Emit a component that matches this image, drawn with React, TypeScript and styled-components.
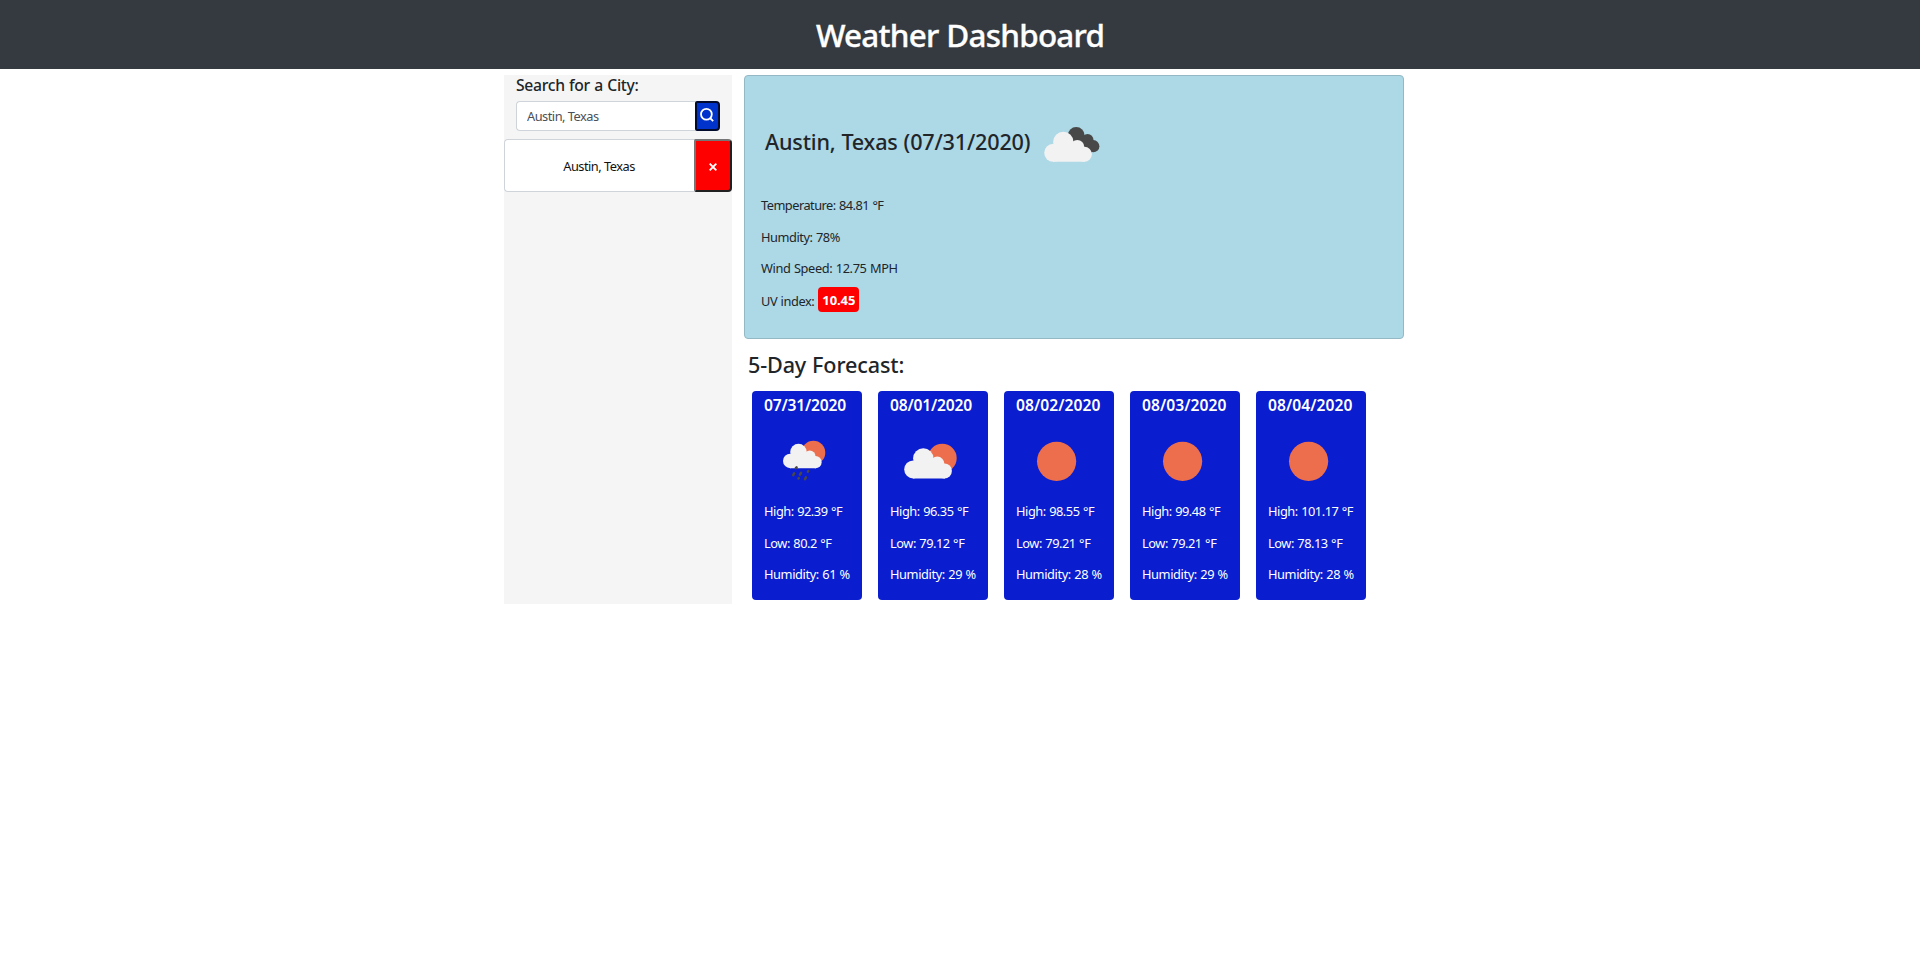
import React from 'react';
import styled, { createGlobalStyle } from 'styled-components';

const GlobalStyle = createGlobalStyle`
  *, *::before, *::after { box-sizing: border-box; }
  body {
    margin: 0;
    background: #fff;
    color: #212529;
    font-family: 'Noto Sans', 'Open Sans', sans-serif;
    font-size: 12.8px;
    line-height: 19.5px;
    word-spacing: 0.5px;
  }
  h1, h2, h3, p { margin: 0; font-weight: 500; white-space: nowrap; }
`;

const Header = styled.header`
  display: flex;
  justify-content: center;
  height: 69px;
  padding-top: 11px;
  background: #343a40;
`;

const PageTitle = styled.h1`
  color: #fff;
  font-size: 31.4px;
  line-height: 48px;
  letter-spacing: -0.76px;
  -webkit-text-stroke: 0.35px #fff;
`;

const Layout = styled.main`
  display: flex;
  gap: 12px;
  width: 900px;
  margin: 6px 0 0 504px;
`;

const Sidebar = styled.aside`
  width: 228px;
  height: 529px;
  background: #f5f5f5;
`;

const SearchPanel = styled.form`
  padding: 0 12px;
`;

const SearchTitle = styled.h3`
  font-size: 15.7px;
  line-height: 20px;
  letter-spacing: -0.29px;
  margin-bottom: 6px;
`;

const SearchRow = styled.div`
  display: flex;
  height: 30px;
`;

const SearchInput = styled.input`
  width: 179px;
  padding: 1px 0 0 10px;
  border: 1px solid #ced4da;
  border-right: 0;
  border-radius: 4px 0 0 4px;
  background: #fff;
  color: #495057;
  font: inherit;
  letter-spacing: -0.5px;
`;

const SearchButton = styled.button`
  display: grid;
  place-items: center;
  width: 25px;
  padding: 0 1px 2px 0;
  border: 2px solid #020b2c;
  border-radius: 2px 4px 4px 2px;
  background: #0033cc;
`;

const HistoryRow = styled.div`
  display: flex;
  height: 53px;
  margin-top: 8px;
`;

const HistoryCity = styled.button`
  width: 190px;
  padding: 2px 1px 0 0;
  border: 1px solid #ced4da;
  border-right: 0;
  border-radius: 4px 0 0 4px;
  background: #fff;
  color: #111;
  font: inherit;
  letter-spacing: -0.5px;
`;

const RemoveButton = styled.button`
  display: grid;
  place-items: center;
  width: 38px;
  padding: 2px 0 0;
  border: 2px solid;
  border-color: #767676 #212121 #212121 #767676;
  border-radius: 2px 4px 4px 2px;
  background: #f00;
`;

const Content = styled.section`
  width: 660px;
`;

const CurrentCard = styled.article`
  height: 264px;
  padding: 19px 16px 0;
  border: 1px solid #95b9c4;
  border-radius: 4px;
  background: #add8e6;
`;

const CurrentHeading = styled.div`
  display: flex;
  height: 101px;
  padding: 10px 0 0 4px;
`;

const CityTitle = styled.h2`
  width: 264.5px;
  padding-top: 21px;
  font-size: 21.6px;
  line-height: 32px;
  letter-spacing: -0.18px;
`;

const Stat = styled.p<{ $tracking?: number }>`
  height: 31.5px;
  font-weight: 400;
  letter-spacing: ${({ $tracking = -0.45 }) => $tracking}px;
`;

const UvBadge = styled.span`
  display: inline-block;
  height: 25px;
  margin: -4px 0 0 4px;
  padding: 0 4px;
  border-radius: 4px;
  background: #f00;
  color: #fff;
  font-size: 13px;
  font-weight: 700;
  line-height: 26px;
  letter-spacing: -0.1px;
  vertical-align: 1px;
`;

const ForecastTitle = styled.h2`
  margin: 10px 0 10px 4px;
  font-size: 21.6px;
  line-height: 32px;
  letter-spacing: -0.14px;
`;

const ForecastList = styled.div`
  display: flex;
  gap: 16px;
  padding-left: 8px;
`;

const DayCard = styled.article`
  width: 110px;
  height: 209px;
  padding: 3px 0 0 12px;
  border-radius: 4px;
  background: #0a1dcf;
  color: #fff;
`;

const DayTitle = styled.h3<{ $tracking: number }>`
  font-size: 15.6px;
  font-weight: 600;
  line-height: 22px;
  letter-spacing: ${({ $tracking }) => $tracking}px;
`;

const DayIcon = styled.div`
  height: 86px;
  padding-top: 5px;
`;

const Art = styled.svg`
  display: block;
  width: 80px;
  height: 80px;
  flex: none;
`;

const Cloud = () => (
  <g fill="#f2f2f2">
    <circle cx="23.2" cy="47.8" r="9" />
    <circle cx="33.3" cy="36.9" r="10.2" />
    <circle cx="47.3" cy="42" r="7" />
    <circle cx="54.4" cy="49.3" r="7.5" />
    <path d="M23 40 33 34 48 38 55 47V56.8H23Z" />
  </g>
);

type Sky = 'clouds' | 'rain' | 'partly' | 'clear';

const WeatherArt = ({ sky }: { sky: Sky }) => (
  <Art viewBox="0 0 80 80" aria-hidden="true">
    {sky === 'clear' && <circle cx="40.6" cy="40.3" r="19.6" fill="#ec6e4c" />}
    {sky === 'clouds' && (
      <>
        <g fill="#484848">
          <circle cx="46.2" cy="30.4" r="8.4" />
          <circle cx="57.6" cy="34.9" r="5.9" />
          <circle cx="63.3" cy="41.2" r="6.1" />
          <path d="M44 34 55 31 64 43 62 47.2 50 45Z" />
        </g>
        <Cloud />
      </>
    )}
    {sky === 'partly' && (
      <>
        <circle cx="52.3" cy="37.1" r="14.4" fill="#ec6e4c" />
        <g transform="translate(0 .6)"><Cloud /></g>
      </>
    )}
    {sky === 'rain' && (
      <>
        <circle cx="49.4" cy="31.7" r="11.9" fill="#ec6e4c" />
        <g transform="translate(7.5 1.2) scale(.81)"><Cloud /></g>
        <g stroke="#484848" strokeWidth="2.5" strokeLinecap="round">
          <path d="M31.8 47.2 32.6 46.4M30.2 52.4 29.2 54.2M37 51.8 36 53.6M44.3 50 43.9 50.6M34.8 57 34.5 57.4M42 56.4 41 58.2" />
        </g>
      </>
    )}
  </Art>
);

type Day = {
  date: string;
  sky: Sky;
  high: string;
  low: string;
  humidity: number;
  tracking: number;
};

const days: Day[] = [
  { date: '07/31/2020', sky: 'rain', high: '92.39', low: '80.2', humidity: 61, tracking: -0.18 },
  { date: '08/01/2020', sky: 'partly', high: '96.35', low: '79.12', humidity: 29, tracking: -0.18 },
  { date: '08/02/2020', sky: 'clear', high: '98.55', low: '79.21', humidity: 28, tracking: 0.08 },
  { date: '08/03/2020', sky: 'clear', high: '99.48', low: '79.21', humidity: 29, tracking: 0.08 },
  { date: '08/04/2020', sky: 'clear', high: '101.17', low: '78.13', humidity: 28, tracking: 0.08 },
];

export default function App() {
  return (
    <>
      <GlobalStyle />
      <Header>
        <PageTitle>Weather Dashboard</PageTitle>
      </Header>
      <Layout>
        <Sidebar>
          <SearchPanel>
            <SearchTitle>Search for a City:</SearchTitle>
            <SearchRow>
              <SearchInput defaultValue="Austin, Texas" aria-label="City" />
              <SearchButton type="button" aria-label="Search">
                <svg width="14" height="14" viewBox="0 0 14 14" fill="none" stroke="#fff" strokeWidth="1.8">
                  <circle cx="6.4" cy="6.3" r="5.4" />
                  <path d="M10 10 13.2 13.2" />
                </svg>
              </SearchButton>
            </SearchRow>
          </SearchPanel>
          <HistoryRow>
            <HistoryCity>Austin, Texas</HistoryCity>
            <RemoveButton aria-label="Remove">
              <svg width="8" height="8" viewBox="0 0 8 8" stroke="#fff" strokeWidth="1.9">
                <path d="M.7.7 7.3 7.3M7.3.7.7 7.3" />
              </svg>
            </RemoveButton>
          </HistoryRow>
        </Sidebar>
        <Content>
          <CurrentCard>
            <CurrentHeading>
              <CityTitle>Austin, Texas (07/31/2020)</CityTitle>
              <WeatherArt sky="clouds" />
            </CurrentHeading>
            <Stat $tracking={-0.52}>Temperature: 84.81 °F</Stat>
            <Stat $tracking={-0.44}>Humdity: 78%</Stat>
            <Stat $tracking={-0.38}>Wind Speed: 12.75 MPH</Stat>
            <Stat $tracking={-0.42}>
              UV index:<UvBadge>10.45</UvBadge>
            </Stat>
          </CurrentCard>
          <ForecastTitle>5-Day Forecast:</ForecastTitle>
          <ForecastList>
            {days.map((day) => (
              <DayCard key={day.date}>
                <DayTitle $tracking={day.tracking}>{day.date}</DayTitle>
                <DayIcon>
                  <WeatherArt sky={day.sky} />
                </DayIcon>
                <Stat>High: {day.high} °F</Stat>
                <Stat>Low: {day.low} °F</Stat>
                <Stat $tracking={-0.4}>Humidity: {day.humidity} %</Stat>
              </DayCard>
            ))}
          </ForecastList>
        </Content>
      </Layout>
    </>
  );
}
